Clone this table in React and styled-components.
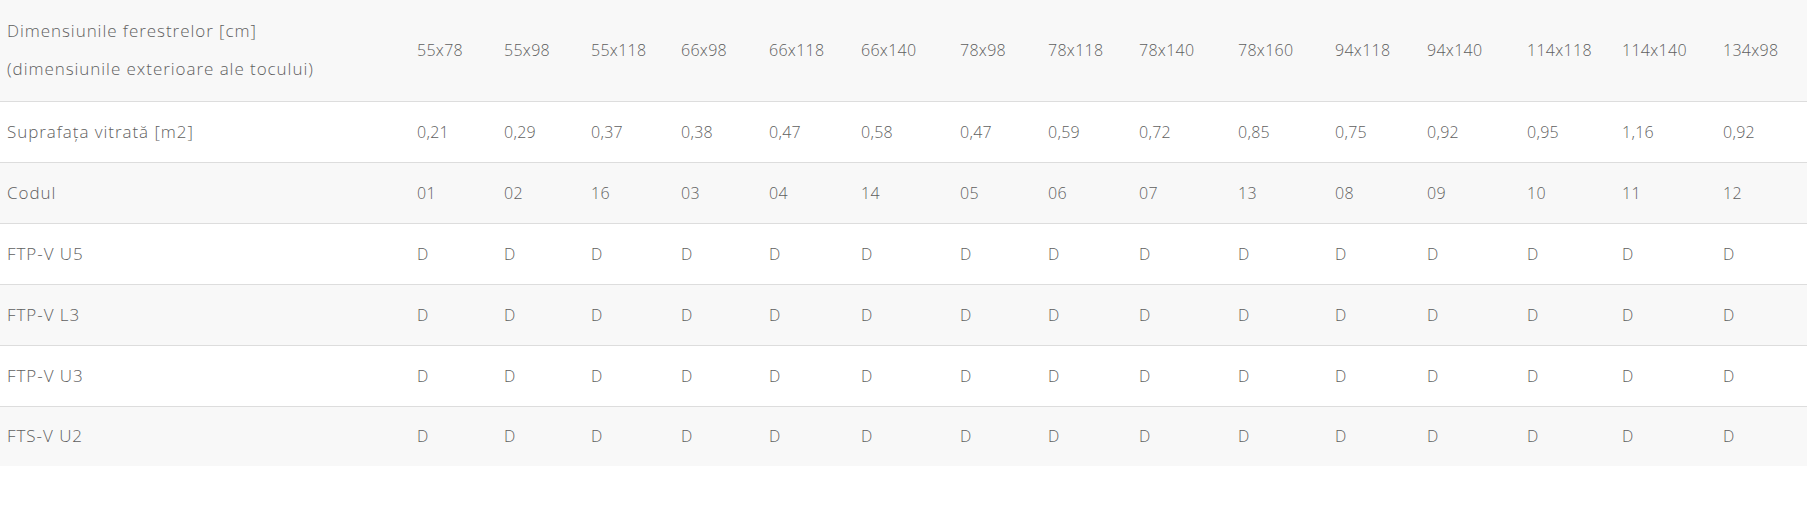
import React from "react";
import styled, { createGlobalStyle } from "styled-components";

const GlobalStyle = createGlobalStyle`
    html, body {
        margin: 0;
        padding: 0;
        background: #ffffff;
    }
`;

const widths = [410, 87, 87, 90, 88, 92, 99, 88, 91, 99, 97, 92, 100, 95, 101, 91];

const sizes = [
    "55x78", "55x98", "55x118", "66x98", "66x118", "66x140", "78x98", "78x118",
    "78x140", "78x160", "94x118", "94x140", "114x118", "114x140", "134x98",
];

const rows = [
    {
        label: "Suprafața vitrată [m2]",
        values: ["0,21", "0,29", "0,37", "0,38", "0,47", "0,58", "0,47", "0,59", "0,72", "0,85", "0,75", "0,92", "0,95", "1,16", "0,92"],
    },
    {
        label: "Codul",
        values: ["01", "02", "16", "03", "04", "14", "05", "06", "07", "13", "08", "09", "10", "11", "12"],
    },
    { label: "FTP-V U5", values: Array(15).fill("D") },
    { label: "FTP-V L3", values: Array(15).fill("D") },
    { label: "FTP-V U3", values: Array(15).fill("D") },
    { label: "FTS-V U2", values: Array(15).fill("D") },
];

export default function App() {
    return (
        <>
            <GlobalStyle />
            <Wrapper>
                <Table>
                    <colgroup>
                        {widths.map((w, i) => (
                            <Col key={i} $w={w} />
                        ))}
                    </colgroup>
                    <tbody>
                        <Row>
                            <HeadCell>
                                <Line>Dimensiunile ferestrelor [cm]</Line>
                                <Line>(dimensiunile exterioare ale tocului)</Line>
                            </HeadCell>
                            {sizes.map((s) => (
                                <Cell key={s}>{s}</Cell>
                            ))}
                        </Row>
                        {rows.map((row) => (
                            <Row key={row.label}>
                                <LabelCell>{row.label}</LabelCell>
                                {row.values.map((v, i) => (
                                    <Cell key={i}>{v}</Cell>
                                ))}
                            </Row>
                        ))}
                    </tbody>
                </Table>
            </Wrapper>
        </>
    );
}

const Wrapper = styled.div`
    width: 1807px;
    font-family: "Open Sans", "Liberation Sans", sans-serif;
    font-weight: 300;
    font-size: 16px;
    color: #5f5f5f;
`
const Table = styled.table`
    width: 1807px;
    table-layout: fixed;
    border-collapse: collapse;
    border-spacing: 0;
`
const Col = styled.col`
    width: ${(p) => p.$w}px;
`
const Row = styled.tr`
    height: 61px;
    border-bottom: 1px solid #dddddd;

    &:nth-child(odd) {
        background: #f8f8f8;
    }

    &:first-child {
        height: 101px;
    }

    &:last-child {
        border-bottom: none;
        height: 60px;
    }
`
const Cell = styled.td`
    padding: 0 0 0 7px;
    vertical-align: middle;
    white-space: nowrap;
    line-height: 24px;
    letter-spacing: 0.3px;
`
const LabelCell = styled(Cell)`
    font-size: 17px;
    letter-spacing: 0.95px;
`
const HeadCell = styled(LabelCell)`
    padding-top: 0;
`
const Line = styled.div`
    line-height: 38px;
`
